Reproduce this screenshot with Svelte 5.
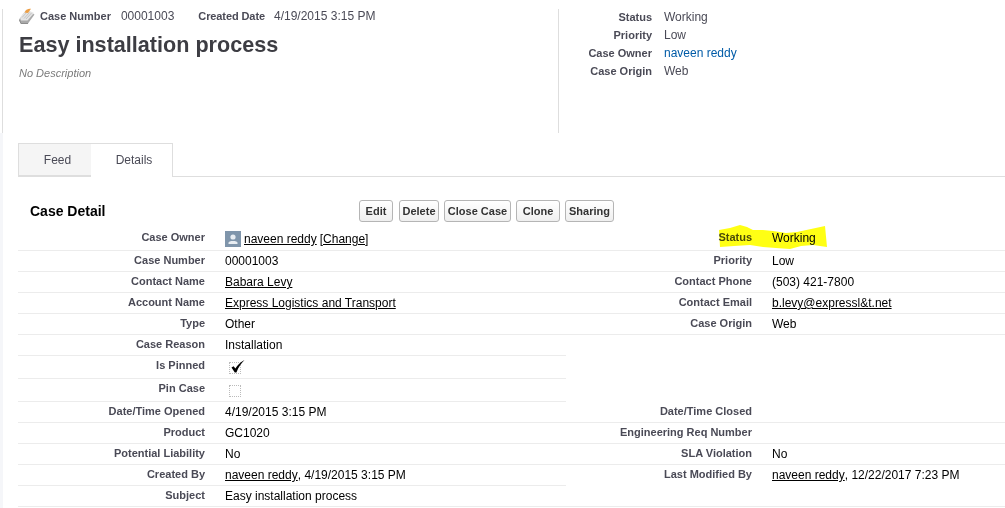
<script>
  const meta = [
    { label: 'Status', value: 'Working' },
    { label: 'Priority', value: 'Low' },
    { label: 'Case Owner', value: 'naveen reddy', link: true },
    { label: 'Case Origin', value: 'Web' }
  ];

  // each side: [label, link text, plain text]
  const rows = [
    { cls: 'first', left: ['Case Owner', 'owner'], right: ['Status', '', 'Working'] },
    { left: ['Case Number', '', '00001003'], right: ['Priority', '', 'Low'] },
    { left: ['Contact Name', 'Babara Levy'], right: ['Contact Phone', '', '(503) 421-7800'] },
    { left: ['Account Name', 'Express Logistics and Transport'], right: ['Contact Email', 'b.levy@expressl&t.net'] },
    { left: ['Type', '', 'Other'], right: ['Case Origin', '', 'Web'] },
    { left: ['Case Reason', '', 'Installation'], open: true },
    { cls: 'tall', left: ['Is Pinned', 'checked'], open: true },
    { cls: 'tall', left: ['Pin Case', 'unchecked'], open: true },
    { left: ['Date/Time Opened', '', '4/19/2015 3:15 PM'], right: ['Date/Time Closed', '', ''] },
    { left: ['Product', '', 'GC1020'], right: ['Engineering Req Number', '', ''] },
    { left: ['Potential Liability', '', 'No'], right: ['SLA Violation', '', 'No'] },
    { left: ['Created By', 'naveen reddy', ', 4/19/2015 3:15 PM'], right: ['Last Modified By', 'naveen reddy', ', 12/22/2017 7:23 PM'], open: true },
    { left: ['Subject', '', 'Easy installation process'], right: ['', '', ''] }
  ];
  const buttons = ['Edit', 'Delete', 'Close Case', 'Clone', 'Sharing'];
</script>

{#snippet cell(side, open)}
  <div class="cell" class:open>
    <div class="label">{side[0]}</div>
    <div class="value">
      {#if side[1] === 'owner'}
        <svg class="avatar" viewBox="0 0 16 16" width="16" height="16">
          <rect width="16" height="16" fill="#7f95ab" />
          <circle cx="8" cy="6" r="2.6" fill="#e8edf2" />
          <path d="M3.5 13v-1.2c0-1.3 2-1.9 4.5-1.9s4.5.6 4.5 1.9V13z" fill="#e8edf2" />
        </svg>
        <a href="#owner">naveen reddy</a> <a href="#change">[Change]</a>
      {:else if side[1] === 'checked' || side[1] === 'unchecked'}
        <span class="check">
          {#if side[1] === 'checked'}
            <svg viewBox="0 0 14 14" width="14" height="14">
              <path d="M.5 7.5 2.6 6.3 4.4 8.4C6.5 5 9.5 2 13.5 0 10.5 3 7.5 7 5.4 12.4H3.8z" fill="#000" />
            </svg>
          {/if}
        </span>
      {:else}
        {#if side[1]}<a href="#link">{side[1]}</a>{/if}{side[2] ?? ''}
      {/if}
    </div>
  </div>
{/snippet}

<div class="page">
  <header class="head">
    <div class="summary">
      <div class="ids">
        <svg class="case-icon" viewBox="0 0 16 16" width="16" height="16">
          <path d="M0 11.5 7 2.5 15.5 6.5 9 15.5 1.5 15.5z" fill="#a9a9a9" />
          <path d="M1 9.5 7.5 1.5 15 5 8.5 12.5 2 12.5z" fill="#e4e4e4" />
          <path d="M3 9.5 8.5 3.5M5 10.5 10.5 4.5M7 11 12.5 5" stroke="#c4c4c4" fill="none" />
          <path d="M5.5 4.5C6.5 2 9 .3 12 .8L9 5z" fill="#ed9f45" />
          <path d="M.5 12 2 15.5H9" fill="none" stroke="#8c8c8c" />
        </svg>
        <span class="id-label">Case Number</span>
        <span class="id-value">00001003</span>
        <span class="id-label created">Created Date</span>
        <span class="id-value">4/19/2015 3:15 PM</span>
      </div>
      <h1>Easy installation process</h1>
      <p class="desc">No Description</p>
    </div>
    <dl class="meta">
      {#each meta as m}
        <div class="meta-row">
          <dt>{m.label}</dt>
          <dd class:link={m.link}>{m.value}</dd>
        </div>
      {/each}
    </dl>
  </header>

  <main class="main">
    <nav class="tabs">
      <div class="tab">Feed</div>
      <div class="tab active">Details</div>
    </nav>

    <div class="detail-head">
      <h2>Case Detail</h2>
      <div class="buttons">
        {#each buttons as b}
          <button type="button">{b}</button>
        {/each}
      </div>
    </div>

    <section class="table">
      <svg class="marker" viewBox="0 0 112 28" width="112" height="28">
        <path d="M3 6 14 4 24 1 31 3 37 6 47 6 57 7 70 9 81 8 95 5 109 2 111 23 97 21 85 22 74 25 60 24 47 23 34 21 18 22 4 23z" fill="#ffff14" />
      </svg>
      {#each rows as row}
        <div class="row {row.cls ?? ''}">
          {@render cell(row.left)}
          {#if row.right}
            {@render cell(row.right, row.open)}
          {:else}
            <div class="cell open"></div>
          {/if}
        </div>
      {/each}
    </section>
  </main>
</div>

<style>
  :global(body) {
    background: #fff;
  }
  .page {
    width: 1005px;
    height: 508px;
    overflow: hidden;
    font-family: 'Liberation Sans', Arial, sans-serif;
  }
  .head {
    display: flex;
    height: 124px;
    margin: 9px 0 0 2px;
    border-left: 1px solid #dedede;
  }
  .summary {
    width: 555px;
    padding-left: 16px;
    box-sizing: border-box;
  }
  .ids {
    display: flex;
    align-items: center;
    height: 15px;
    margin-top: -1px;
    font-size: 12px;
    color: #4a4a56;
  }
  .case-icon {
    margin-right: 5px;
  }
  .id-label {
    font-size: 11px;
    font-weight: bold;
    margin-right: 10px;
  }
  .created {
    margin-left: 24px;
    margin-right: 9px;
    letter-spacing: -0.1px;
  }
  h1 {
    margin: 8px 0 0;
    font-size: 21.6px;
    line-height: 28px;
    font-weight: bold;
    color: #3d3d43;
  }
  .desc {
    margin: 8px 0 0;
    font-size: 11px;
    font-style: italic;
    color: #7b7b7b;
  }
  .meta {
    margin: 0;
    padding-left: 1px;
    border-left: 1px solid #dedede;
    flex: 1;
  }
  .meta-row {
    display: flex;
    height: 18px;
    line-height: 16px;
  }
  dt {
    width: 92px;
    text-align: right;
    font-size: 11px;
    font-weight: bold;
    color: #4a4a56;
  }
  dd {
    margin: 0 0 0 12px;
    font-size: 12px;
    color: #4a4a56;
  }
  dd.link {
    color: #015ba7;
  }
  .main {
    height: 375px;
    padding-top: 10px;
    box-sizing: border-box;
    border-left: 3px solid #f5f6f9;
  }
  .tabs {
    display: flex;
    height: 34px;
    margin-left: 15px;
    border-bottom: 1px solid #dedede;
    box-sizing: border-box;
  }
  .tab {
    width: 73px;
    height: 33px;
    padding-left: 5px;
    line-height: 33px;
    text-align: center;
    font-size: 12px;
    color: #4a4a56;
    background: #f5f5f5;
    border: 1px solid #dedede;
    border-right: 0;
    box-sizing: border-box;
  }
  .tab.active {
    width: 82px;
    height: 34px;
    background: #fff;
    border-right: 1px solid #dedede;
    border-bottom: 0;
    border-left: 0;
  }
  .detail-head {
    display: flex;
    align-items: center;
    height: 22px;
    margin-top: 23px;
    padding-left: 27px;
  }
  h2 {
    width: 329px;
    margin: 0;
    font-size: 14px;
    font-weight: bold;
    color: #000;
  }
  .buttons {
    display: flex;
    gap: 5px;
  }
  button {
    height: 22px;
    padding: 0;
    font: bold 11px 'Liberation Sans', Arial, sans-serif;
    color: #333;
    background: linear-gradient(#fff, #efefef);
    border: 1px solid #b5b5b5;
    border-radius: 3px;
  }
  button:nth-child(1) {
    width: 34px;
    margin-right: 1px;
  }
  button:nth-child(2) {
    width: 40px;
  }
  button:nth-child(3) {
    width: 67px;
  }
  button:nth-child(4) {
    width: 44px;
  }
  button:nth-child(5) {
    width: 49px;
  }
  .table {
    position: relative;
    margin: 7px 0 0 15px;
  }
  .marker {
    position: absolute;
    left: 698px;
    top: -5px;
    mix-blend-mode: multiply;
  }
  .row {
    display: grid;
    grid-template-columns: 548px 439px;
    height: 21px;
  }
  .row.first {
    height: 22px;
  }
  .row.tall {
    height: 23px;
  }
  .cell {
    display: flex;
    border-bottom: 1px solid #ececec;
    box-sizing: border-box;
  }
  .cell.open {
    border-bottom-color: transparent;
  }
  .cell + .cell .label {
    width: 186px;
  }
  .label {
    width: 187px;
    flex: none;
    padding-top: 3px;
    text-align: right;
    font-size: 11px;
    line-height: 13px;
    font-weight: bold;
    color: #4a4a56;
  }
  .first .label {
    padding-top: 2px;
  }
  .value {
    display: flex;
    align-items: center;
    align-self: flex-start;
    padding: 3px 0 0 20px;
    font-size: 12px;
    line-height: 14px;
    color: #000;
    white-space: pre-wrap;
  }
  .first .value {
    padding-top: 2px;
  }
  .avatar {
    margin-right: 3px;
  }
  a {
    color: #000;
  }
  a + a {
    margin-left: 3px;
  }
  .check {
    display: block;
    position: relative;
    width: 12px;
    height: 12px;
    margin: 3px 0 0 4px;
    border: 1px dotted #bbb;
    box-sizing: border-box;
  }
  .check svg {
    position: absolute;
    left: 1px;
    top: -3px;
  }
</style>
